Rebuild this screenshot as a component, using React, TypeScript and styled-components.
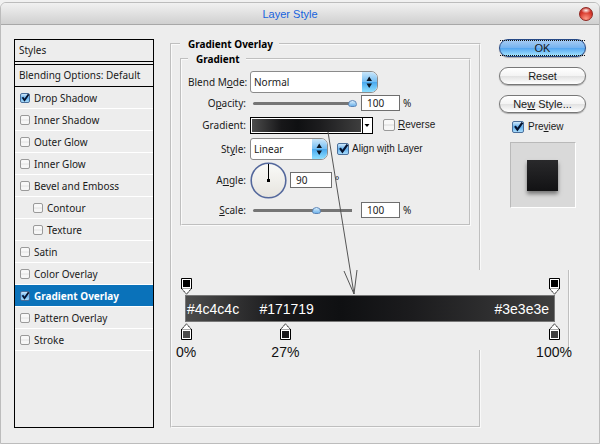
import React, { useState } from "react";
import styled, { createGlobalStyle, css } from "styled-components";

const Global = createGlobalStyle`
  *, *::before, *::after { box-sizing: border-box; }
  body {
    margin: 0;
    background: #f1f1f1;
    color: #1a1a1a;
    font: 10px/14px "Noto Sans", Tahoma, sans-serif;
  }
  button, input, select { font: inherit; color: inherit; margin: 0; }
`;

const arial = css`
  font-family: "Liberation Sans", Arial, sans-serif;
`;

const Window = styled.main`
  display: flex;
  flex-direction: column;
  min-height: calc(100vh - 2px);
  margin-top: 2px;
  border: 1px solid #bcbcbc;
  border-radius: 6px 6px 0 0;
  background: #ededed;
  overflow: hidden;
`;

const TitleBar = styled.header`
  display: grid;
  grid-template-columns: 1fr 20px;
  align-items: center;
  height: 22px;
  flex: none;
  border-bottom: 1px solid #a8a8a8;
  background: linear-gradient(#f1f1f1, #d0d0d0);
`;

const Title = styled.h1`
  ${arial}
  margin: 0;
  font-size: 11px;
  font-weight: 400;
  text-align: center;
  color: #1763dd;
`;

const CloseButton = styled.button`
  width: 14px;
  height: 14px;
  padding: 0;
  border: 1px solid #8f2620;
  border-radius: 50%;
  background:
    radial-gradient(ellipse 5px 3px at 50% 20%, #fff5f2 0, #ffffff00 100%),
    radial-gradient(circle at 50% 90%, #ff9c88 0, #d8392d 55%, #b3211c 100%);
`;

const Body = styled.div`
  flex: 1;
  display: grid;
  grid-template-columns: 140px minmax(0, 1fr) 89px;
  column-gap: 16px;
  padding: 14px 13px 15px 13px;
`;

const StyleList = styled.nav`
  border: 1px solid #000;
  background: #ededed;
`;

const ListHeading = styled.h2`
  margin: 0 0 2px;
  padding: 3px 4px 4px;
  border-bottom: 1px solid #000;
  font-size: 10px;
  font-weight: 400;
`;

const BlendingOptions = styled.button`
  display: block;
  width: 100%;
  padding: 3px 4px 4px;
  border: 0;
  border-top: 1px solid #000;
  border-bottom: 1px solid #000;
  background: none;
  text-align: left;
`;

const Effects = styled.ul`
  margin: 0;
  padding: 0;
  list-style: none;
`;

const Effect = styled.li<{ $nested?: boolean; $selected?: boolean }>`
  display: flex;
  align-items: center;
  height: 22px;
  padding-left: ${(p) => (p.$nested ? 18 : 5)}px;
  border-bottom: 1px solid #fff;
  ${(p) =>
    p.$selected &&
    css`
      background: #0a72ba;
      color: #fff;
      font-weight: 700;
    `}
`;

const CheckLabel = styled.label<{ $gap?: number; $offset?: number }>`
  display: inline-flex;
  align-items: center;
  gap: ${(p) => p.$gap ?? 4}px;
  margin-left: ${(p) => p.$offset ?? 0}px;
  white-space: nowrap;
`;

const SmallCheckLabel = styled(CheckLabel)`
  ${arial}
`;

const BoxWrap = styled.span<{ $size: number }>`
  display: grid;
  flex: none;
  width: ${(p) => p.$size}px;
  height: ${(p) => p.$size}px;
  & > * {
    grid-area: 1 / 1;
    width: 100%;
    height: 100%;
  }
`;

const BoxInput = styled.input`
  appearance: none;
  border: 1px solid #9a9a9a;
  border-radius: 2px;
  background: linear-gradient(#f8f8f8 0 40%, #dadada 50%, #f6f6f6 60%);
  &:checked {
    border-color: #4a6f9b;
    background: linear-gradient(#cfe8fb, #63b0ee 50%, #a9dcfb);
  }
`;

const Tick = styled.svg`
  overflow: visible;
  pointer-events: none;
  input:not(:checked) + & {
    display: none;
  }
`;

const Panel = styled.div`
  position: relative;
`;

const group = css`
  min-width: 0;
  margin: 0;
  border: 2px groove rgba(255, 255, 255, 0.7);
`;

const OuterGroup = styled.fieldset`
  ${group}
  height: 100%;
  padding: 5px 8px 0;
`;

const InnerGroup = styled.fieldset`
  ${group}
  padding: 7px 6px 3px;
`;

const Legend = styled.legend`
  padding: 0 6px 0 8px;
  margin-left: 0;
  font-weight: 700;
  line-height: 10px;
  color: #000;
`;

const Row = styled.div<{ $height: number }>`
  display: grid;
  grid-template-columns: 58px minmax(0, 1fr);
  column-gap: 4px;
  align-items: center;
  height: ${(p) => p.$height}px;
`;

const RowLabel = styled.label`
  text-align: right;
  white-space: nowrap;
`;

const Controls = styled.div`
  display: flex;
  align-items: center;
`;

const SelectWrap = styled.span<{ $width: number }>`
  display: grid;
  grid-template-columns: 1fr 15px;
  width: ${(p) => p.$width}px;
  height: 22px;
  border: 1px solid #8b8b8b;
  border-radius: 3px 7px 7px 3px;
  overflow: hidden;
  background: #fff;
`;

const Select = styled.select`
  appearance: none;
  grid-area: 1 / 1 / 2 / 3;
  padding: 0 18px 0 3px;
  border: 0;
  background: none;
`;

const SelectArrows = styled.svg`
  grid-area: 1 / 2;
  width: 15px;
  height: 20px;
  pointer-events: none;
  background: linear-gradient(#c9e6fa, #77bff3 48%, #4aa9ee 52%, #8fe0ff);
`;

const Slider = styled.input`
  appearance: none;
  width: 104px;
  height: 10px;
  margin: 0 4px 0 3px;
  background: none;
  &::-webkit-slider-runnable-track {
    height: 3px;
    border-radius: 2px;
    background: linear-gradient(90deg, #757575 0 99px, transparent 99px);
  }
  &::-webkit-slider-thumb {
    appearance: none;
    width: 9px;
    height: 7px;
    margin-top: -2px;
    border: 1px solid #5c86b8;
    border-radius: 5px 5px 3px 3px;
    background: linear-gradient(#d9effd, #6fb2ea);
  }
`;

const NumberBox = styled.input<{ $width: number }>`
  width: ${(p) => p.$width}px;
  height: 16px;
  padding: 0 5px;
  border: 1px solid #6e6e6e;
  background: #fff;
`;

const Unit = styled.span`
  margin-left: 3px;
`;

const ramp = css`
  background: linear-gradient(90deg, #4c4c4c, #171719 27%, #0f1012 42%, #1c1c1e 62%, #3e3e3e);
`;

const GradientPicker = styled.button`
  display: grid;
  grid-template-columns: 1fr 10px;
  width: 123px;
  height: 17px;
  padding: 0;
  border: 1px solid #000;
  background: #fff;
`;

const GradientSwatch = styled.span`
  ${ramp}
  background-clip: padding-box;
  border: 1px solid #fff;
  box-shadow: 1px 0 0 #000;
`;

const DropArrow = styled.svg`
  width: 10px;
  height: 15px;
`;

const Dial = styled.svg`
  width: 37px;
  height: 37px;
  margin-right: 3px;
`;

const Side = styled.aside`
  display: flex;
  flex-direction: column;
  align-items: stretch;
  padding-left: 2px;
`;

const PillButton = styled.button<{ $primary?: boolean }>`
  ${arial}
  height: 18px;
  margin-bottom: 10px;
  padding: 0;
  border: 1px solid #777;
  border-radius: 9px;
  background: linear-gradient(#fff 0, #f4f4f4 48%, #e2e2e2 52%, #fff);
  box-shadow: 0 1px 1px #aaa;
  font-size: 11px;
  line-height: 14px;
  ${(p) =>
    p.$primary &&
    css`
      border-color: #274a86;
      background: linear-gradient(#a9cdf3 0, #77b4f0 48%, #55a6f0 52%, #a6e6ff);
    `}
`;

const FocusMark = styled.span`
  display: block;
  height: 16px;
  border: 1px dotted #111;
  border-width: 1px 0;
`;

const PreviewToggle = styled.div`
  margin: -3px 0 6px 13px;
`;

const PreviewWell = styled.div`
  display: grid;
  place-items: center;
  align-self: center;
  width: 66px;
  height: 66px;
  border: 1px solid;
  border-color: #b9b9b9 #fff #fff #b9b9b9;
  background: #d9d9d9;
`;

const PreviewSwatch = styled.div`
  width: 31px;
  height: 31px;
  background: linear-gradient(#29292b, #121214);
  box-shadow: 0 3px 4px #777;
`;

const Callout = styled.section`
  ${arial}
  position: absolute;
  top: 231px;
  left: 2px;
  right: -89px;
  height: 80px;
  padding: 25px 13px 0;
  border-right: 2px groove rgba(255, 255, 255, 0.7);
  background: #ededed;
  font-size: 14px;
  line-height: 16px;
`;

const Bar = styled.div`
  ${ramp}
  position: relative;
  height: 27px;
  border: 1px solid #777;
`;

const HexLabels = styled.div`
  display: grid;
  grid-template-columns: 20% 1fr auto;
  align-items: center;
  height: 100%;
  padding: 0 5px 0 1px;
  color: #fff;
`;

const StopPin = styled.span<{ $at: number; $above?: boolean }>`
  position: absolute;
  left: ${(p) => p.$at}%;
  ${(p) => (p.$above ? "bottom: 26px;" : "top: 27px;")}
  display: flex;
  flex-direction: column;
  align-items: center;
  gap: 4px;
  width: 40px;
  margin-left: -20px;
  color: #111;
`;

const PinShape = styled.svg<{ $flip?: boolean }>`
  width: 11px;
  height: 17px;
  ${(p) => p.$flip && "transform: rotate(180deg);"}
`;

const Pointer = styled.svg`
  position: absolute;
  top: 92px;
  left: 155px;
  width: 34px;
  height: 166px;
  pointer-events: none;
`;

function CheckBox({ size = 10, checked }: { size?: number; checked?: boolean }) {
  return (
    <BoxWrap $size={size}>
      <BoxInput type="checkbox" defaultChecked={checked} />
      <Tick viewBox="0 0 12 12" aria-hidden="true">
        <path d="M3 5.2 5.4 8.6 10.4 1.6" fill="none" stroke="#06122e" strokeWidth="2.2" />
      </Tick>
    </BoxWrap>
  );
}

function DropDown({ id, width, options }: { id: string; width: number; options: string[] }) {
  return (
    <SelectWrap $width={width}>
      <Select id={id}>
        {options.map((o) => (
          <option key={o}>{o}</option>
        ))}
      </Select>
      <SelectArrows viewBox="0 0 15 20" aria-hidden="true">
        <path d="M4.5 9 7.2 4.5 10 9ZM4.5 11.5h5.5L7.2 16Z" fill="#0b1420" />
      </SelectArrows>
    </SelectWrap>
  );
}

function Amount({ id, name, max }: { id: string; name: string; max: number }) {
  const [value, setValue] = useState(100);
  return (
    <Controls>
      <Slider id={id} type="range" max={max} value={value} onChange={(e) => setValue(Number(e.target.value))} />
      <NumberBox
        $width={39}
        aria-label={`${name} value`}
        value={value}
        onChange={(e) => setValue(Number(e.target.value) || 0)}
      />
      <Unit>%</Unit>
    </Controls>
  );
}

function Stop({ at, color, label, above }: { at: number; color: string; label?: string; above?: boolean }) {
  return (
    <StopPin $at={at} $above={above}>
      <PinShape viewBox="0 0 11 17" $flip={above} aria-hidden="true">
        <path d="M5.5 1 10.5 6.5V16.5H.5V6.5Z" fill="#fff" />
        <path d="M.5 6.5 5.5 .8 10.5 6.5" fill="none" stroke="#111" strokeDasharray="1.6 .5" />
        <path d="M.5 6V16.5H10.5V6" fill="none" stroke="#000" />
        <path d="M1 6.5H10" stroke="#aaa" />
        <rect x="2" y="8" width="7" height="7" fill={color} />
      </PinShape>
      {label}
    </StopPin>
  );
}

const effects = [
  { name: "Drop Shadow", on: true },
  { name: "Inner Shadow" },
  { name: "Outer Glow" },
  { name: "Inner Glow" },
  { name: "Bevel and Emboss" },
  { name: "Contour", nested: true },
  { name: "Texture", nested: true },
  { name: "Satin" },
  { name: "Color Overlay" },
  { name: "Gradient Overlay", on: true, selected: true },
  { name: "Pattern Overlay" },
  { name: "Stroke" },
];

export default function App() {
  return (
    <>
      <Global />
      <Window>
        <TitleBar>
          <Title>Layer Style</Title>
          <CloseButton aria-label="Close" />
        </TitleBar>
        <Body>
          <StyleList>
            <ListHeading>Styles</ListHeading>
            <BlendingOptions>Blending Options: Default</BlendingOptions>
            <Effects>
              {effects.map((e) => (
                <Effect key={e.name} $nested={e.nested} $selected={e.selected}>
                  <CheckLabel>
                    <CheckBox checked={e.on} />
                    {e.name}
                  </CheckLabel>
                </Effect>
              ))}
            </Effects>
          </StyleList>

          <Panel>
            <OuterGroup>
              <Legend>Gradient Overlay</Legend>
              <InnerGroup>
                <Legend>Gradient</Legend>
                <Row $height={22}>
                  <RowLabel htmlFor="blend">Blend M<u>o</u>de:</RowLabel>
                  <Controls>
                    <DropDown id="blend" width={128} options={["Normal", "Multiply", "Screen"]} />
                  </Controls>
                </Row>
                <Row $height={20}>
                  <RowLabel htmlFor="opacity">O<u>p</u>acity:</RowLabel>
                  <Amount id="opacity" name="Opacity" max={100} />
                </Row>
                <Row $height={24}>
                  <RowLabel htmlFor="gradient">Gradient:</RowLabel>
                  <Controls>
                    <GradientPicker id="gradient">
                      <GradientSwatch />
                      <DropArrow viewBox="0 0 10 15" aria-hidden="true">
                        <path d="M2.5 6h5L5 9Z" fill="#000" />
                      </DropArrow>
                    </GradientPicker>
                    <SmallCheckLabel $gap={3} $offset={10}>
                      <CheckBox size={12} />
                      <span><u>R</u>everse</span>
                    </SmallCheckLabel>
                  </Controls>
                </Row>
                <Row $height={24}>
                  <RowLabel htmlFor="style">St<u>y</u>le:</RowLabel>
                  <Controls>
                    <DropDown id="style" width={78} options={["Linear", "Radial", "Angle"]} />
                    <SmallCheckLabel $gap={3} $offset={9}>
                      <CheckBox size={12} checked />
                      <span>Align w<u>i</u>th Layer</span>
                    </SmallCheckLabel>
                  </Controls>
                </Row>
                <Row $height={38}>
                  <RowLabel htmlFor="angle">A<u>n</u>gle:</RowLabel>
                  <Controls>
                    <Dial viewBox="0 0 37 37" aria-hidden="true">
                      <defs>
                        <linearGradient id="face" x1="0" y1="0" x2="0" y2="1">
                          <stop offset="0" stopColor="#fafaf8" />
                          <stop offset="1" stopColor="#e6e4de" />
                        </linearGradient>
                      </defs>
                      <circle cx="18.5" cy="18.5" r="17.3" fill="url(#face)" stroke="#54689c" strokeWidth="1.6" />
                      <path d="M18.5 2V18" stroke="#000" />
                      <rect x="17" y="17" width="3" height="3" />
                    </Dial>
                    <NumberBox id="angle" $width={42} defaultValue="90" />
                    <Unit>°</Unit>
                  </Controls>
                </Row>
                <Row $height={22}>
                  <RowLabel htmlFor="scale"><u>S</u>cale:</RowLabel>
                  <Amount id="scale" name="Scale" max={162} />
                </Row>
              </InnerGroup>
            </OuterGroup>

            <Callout>
              <Bar>
                <HexLabels>
                  <span>#4c4c4c</span>
                  <span>#171719</span>
                  <span>#3e3e3e</span>
                </HexLabels>
                <Stop at={0} color="#000" above />
                <Stop at={100} color="#000" above />
                <Stop at={0} color="#4c4c4c" label="0%" />
                <Stop at={27} color="#171719" label="27%" />
                <Stop at={100} color="#3e3e3e" label="100%" />
              </Bar>
            </Callout>
            <Pointer viewBox="0 0 34 166" aria-hidden="true">
              <path d="M3 1 29 163M19 140 29 163 32 139" fill="none" stroke="#555" />
            </Pointer>
          </Panel>

          <Side>
            <PillButton $primary>
              <FocusMark>OK</FocusMark>
            </PillButton>
            <PillButton>Reset</PillButton>
            <PillButton>Ne<u>w</u> Style...</PillButton>
            <PreviewToggle>
              <SmallCheckLabel>
                <CheckBox size={12} checked />
                <span>Pre<u>v</u>iew</span>
              </SmallCheckLabel>
            </PreviewToggle>
            <PreviewWell>
              <PreviewSwatch />
            </PreviewWell>
          </Side>
        </Body>
      </Window>
    </>
  );
}
